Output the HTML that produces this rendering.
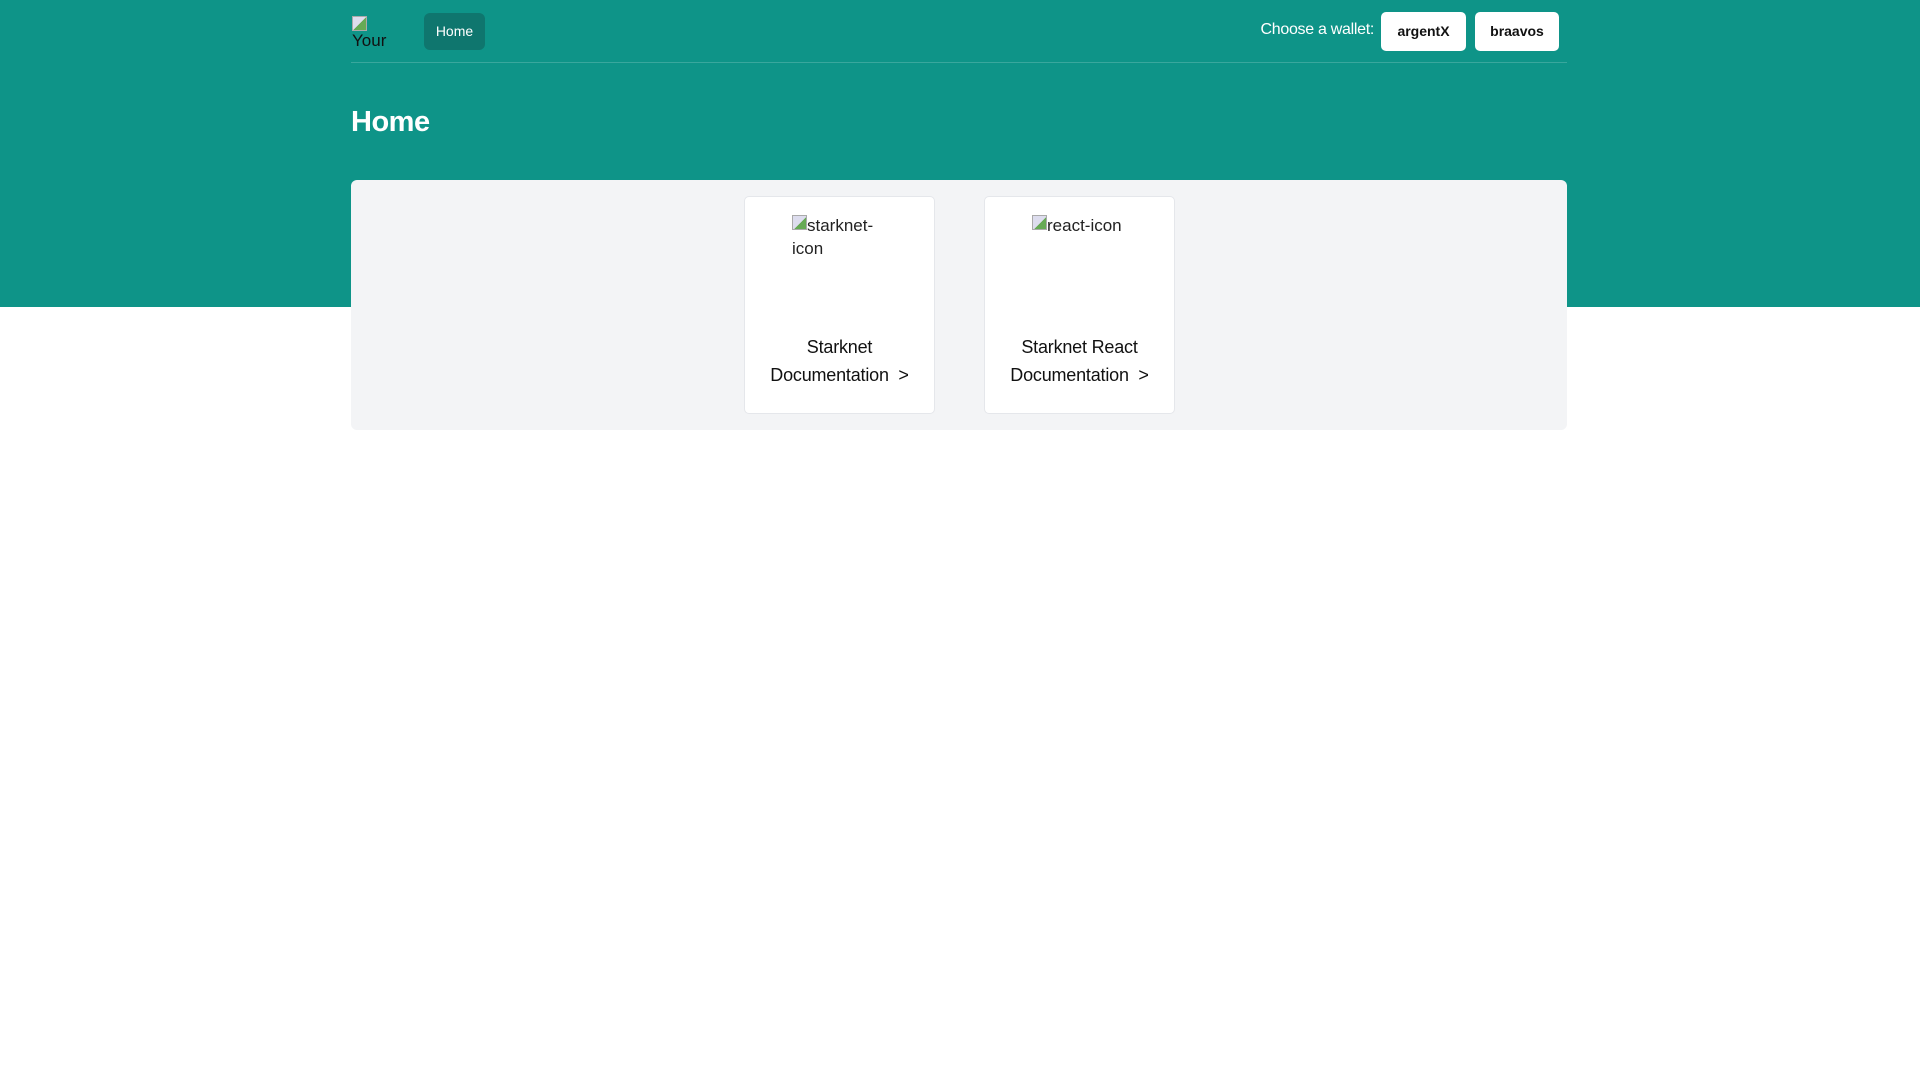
<!DOCTYPE html>
<html><head><meta charset="utf-8"><style>
*{box-sizing:border-box;margin:0;padding:0}
body{width:1920px;height:1080px;background:#fff;font-family:"Liberation Sans",sans-serif;position:relative;overflow:hidden}
.band{position:absolute;left:0;top:0;width:1920px;height:307px;background:#0e9488}
.nav{position:absolute;left:351px;top:0;width:1216px;height:63px;border-bottom:1px solid rgba(255,255,255,.18)}
.logo{position:absolute;left:1px;top:16px;font-size:17px;color:#111;line-height:20px;height:32px;overflow:hidden;width:40px}
.logo i{display:block;width:15px;height:15px;background:linear-gradient(135deg,#dde 50%,#6a5 50%);border:1px solid #aaa}
.home{position:absolute;left:73px;top:13px;width:61px;height:37px;background:#0f766e;border-radius:6px;color:#fff;font-size:14px;text-align:center;line-height:37px}
.cw{position:absolute;right:193px;top:21px;color:#fff;font-size:16px;letter-spacing:-0.3px;white-space:nowrap}
.btn{position:absolute;top:12px;height:39px;background:#fff;border-radius:5px;font-size:14px;font-weight:bold;color:#111;text-align:center;line-height:39px}
h1{position:absolute;left:351px;top:106px;color:#fff;font-size:29px;font-weight:bold;letter-spacing:-0.5px}
.panel{position:absolute;left:351px;top:180px;width:1216px;height:250px;background:#f3f4f6;border-radius:6px}
.card{position:absolute;top:196px;width:191px;height:218px;background:#fff;border:1px solid #e5e7eb;border-radius:5px;text-align:center}
.alt{position:absolute;top:17px;font-size:17px;color:#222;text-align:left;line-height:23px}
.alt i{display:inline-block;width:15px;height:15px;background:linear-gradient(135deg,#dde 55%,#6a5 55%);border:1px solid #aaa;vertical-align:top;margin-top:1px}
.t{position:absolute;left:0;right:0;top:136px;font-size:18px;color:#111;line-height:28px;letter-spacing:-0.2px}
</style></head><body>
<div class="band"></div>
<div class="nav">
 <div class="logo"><i></i>Your</div>
 <div class="home">Home</div>
 <div class="cw">Choose a wallet:</div>
 <div class="btn" style="left:1030px;width:85px">argentX</div>
 <div class="btn" style="left:1124px;width:84px">braavos</div>
</div>
<h1>Home</h1>
<div class="panel"></div>
<div class="card" style="left:744px"><div class="alt" style="left:47px;width:90px"><i></i>starknet-<br>icon</div><div class="t">Starknet<br>Documentation &nbsp;&gt;</div></div>
<div class="card" style="left:984px"><div class="alt" style="left:47px;width:120px"><i></i>react-icon</div><div class="t">Starknet React<br>Documentation &nbsp;&gt;</div></div>
</body></html>
